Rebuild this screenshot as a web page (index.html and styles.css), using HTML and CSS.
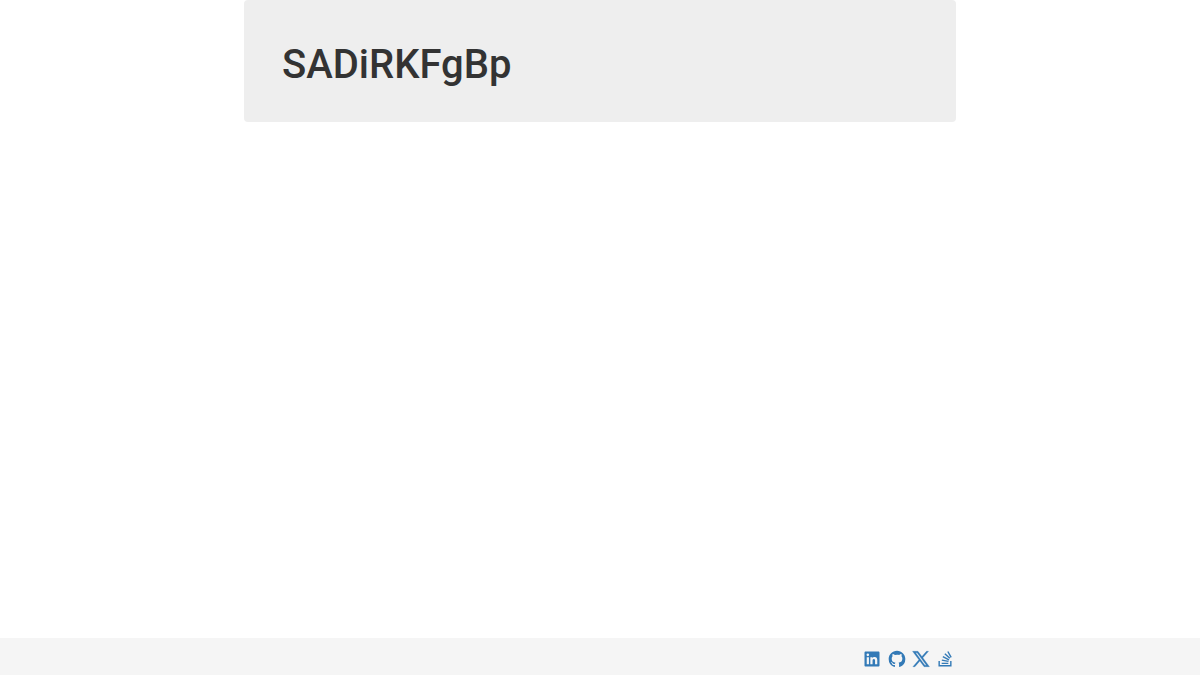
FILE: index.html
```
<!DOCTYPE html>
<html lang="en">
<head>
    <meta charset="UTF-8">
    <meta name="viewport" content="width=device-width, initial-scale=1.0">
    <title>SADiRKFgBp</title>
    <link rel="stylesheet" href="styles.css">
</head>
<body>
    <main class="container">
        <header class="jumbotron">
            <h1>SADiRKFgBp</h1>
        </header>
    </main>

    <footer class="footer">
        <!-- Social links -->
        <nav class="container social">
            <a href="#" aria-label="LinkedIn">
                <svg class="icon" viewBox="0 0 24 24"><path d="M18.335 18.339H15.67v-4.177c0-.996-.02-2.278-1.39-2.278-1.389 0-1.601 1.084-1.601 2.205v4.25h-2.666V9.75h2.56v1.17h.035c.358-.674 1.228-1.387 2.528-1.387 2.7 0 3.2 1.778 3.2 4.091v4.715zM7.003 8.575a1.546 1.546 0 0 1-1.548-1.549 1.548 1.548 0 1 1 1.547 1.549zm1.336 9.764H5.666V9.75H8.34v8.589zM19.67 3H4.329C3.593 3 3 3.58 3 4.297v15.406C3 20.42 3.594 21 4.328 21h15.338C20.4 21 21 20.42 21 19.703V4.297C21 3.58 20.4 3 19.666 3h.003z"/></svg>
            </a>
            <a href="#" aria-label="GitHub">
                <svg class="icon" viewBox="0 0 24 24"><path d="M12 2C6.475 2 2 6.475 2 12a9.994 9.994 0 0 0 6.838 9.488c.5.087.687-.213.687-.476 0-.237-.013-1.024-.013-1.862-2.512.463-3.162-.612-3.362-1.175-.113-.288-.6-1.175-1.025-1.413-.35-.187-.85-.65-.013-.662.788-.013 1.35.725 1.538 1.025.9 1.512 2.338 1.087 2.912.825.088-.65.35-1.087.638-1.337-2.225-.25-4.55-1.113-4.55-4.938 0-1.088.387-1.987 1.025-2.688-.1-.25-.45-1.275.1-2.65 0 0 .837-.262 2.75 1.026a9.28 9.28 0 0 1 2.5-.338c.85 0 1.7.112 2.5.337 1.912-1.3 2.75-1.024 2.75-1.024.55 1.375.2 2.4.1 2.65.637.7 1.025 1.587 1.025 2.687 0 3.838-2.337 4.688-4.562 4.938.362.312.675.912.675 1.85 0 1.337-.013 2.412-.013 2.75 0 .262.188.574.688.474A10.016 10.016 0 0 0 22 12c0-5.525-4.475-10-10-10z"/></svg>
            </a>
            <a href="#" aria-label="X">
                <svg class="icon icon-x" viewBox="-1 -1 26 26"><path d="M8 2H1l8.26 11.01L1.45 22H4.1l6.39-7.35L16 22h7l-8.61-11.47L21.8 2h-2.65l-5.99 6.88L8 2Zm9 18L5 4h2l12 16h-2Z"/></svg>
            </a>
            <a href="#" aria-label="Stack Overflow">
                <svg class="icon icon-line" viewBox="0 0 24 24"><path d="M5 14.5V20h14v-5.5M8 17.2h8M8.2 13.4l8 1.5M9.4 9.2l7.4 3.8M11.8 5.6l6 5.6M15.4 3l4 7"/></svg>
            </a>
        </nav>
    </footer>
</body>
</html>
```

FILE: styles.css
```
* {
    box-sizing: border-box;
}

body {
    display: flex;
    flex-direction: column;
    min-height: 100vh;
    margin: 0;
    font-family: "Noto Sans", sans-serif;
    font-size: 16px;
    color: #333;
    background-color: #fff;
}

.container {
    width: 100%;
    max-width: 712px;
    margin: 0 auto;
}

/* Header panel */
.jumbotron {
    padding: 42px 38px 34px;
    border-radius: 4px;
    background-color: #eee;
}

.jumbotron h1 {
    margin: 0;
    font-family: Roboto, sans-serif;
    font-size: 40px;
    font-weight: 500;
    line-height: 46px;
}

/* Footer strip */
.footer {
    margin-top: auto;
    padding: 11px 0 6px;
    background-color: #f5f5f5;
}

.social {
    line-height: 20px;
    text-align: right;
    padding-right: 1px;
}

.social a {
    display: inline-block;
    color: #337ab7;
    vertical-align: top;
}

.icon {
    display: block;
    width: 20px;
    height: 20px;
    fill: currentColor;
}

.icon-x {
    stroke: currentColor;
    stroke-width: 0.4;
}

.icon-line {
    fill: none;
    stroke: currentColor;
    stroke-width: 1.7;
}
```
